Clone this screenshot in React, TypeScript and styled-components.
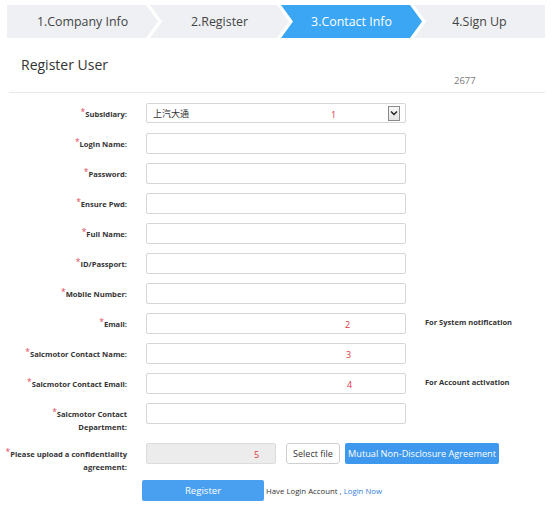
import React from "react";
import styled, { createGlobalStyle, css } from "styled-components";

const GlobalStyle = createGlobalStyle`
  html, body { margin: 0; padding: 0; background: #fff; }
  body {
    font-family: "Open Sans", "Noto Sans CJK SC", sans-serif;
    color: #333;
    overflow: hidden;
  }
`;

const Page = styled.div`
  width: 553px;
  padding-top: 5px;
`;

const StepsBar = styled.div`
  display: flex;
  margin-left: 7px;
  height: 33px;
`;

const Step = styled.div<{ $w: number; $active?: boolean; $pos: "first" | "mid" | "last" }>`
  flex: none;
  width: ${(p) => p.$w}px;
  margin-left: ${(p) => (p.$pos === "first" ? 0 : -8)}px;
  display: flex;
  align-items: center;
  justify-content: center;
  font-size: 12.4px;
  background: ${(p) => (p.$active ? "#3ba6f4" : "#eef0f3")};
  color: ${(p) => (p.$active ? "#fff" : "#444")};
  ${(p) =>
    p.$pos === "first"
      ? css`clip-path: polygon(0 0, calc(100% - 12px) 0, 100% 50%, calc(100% - 12px) 100%, 0 100%);`
      : p.$pos === "last"
      ? css`clip-path: polygon(0 0, 100% 0, 100% 100%, 0 100%, 12px 50%);`
      : css`clip-path: polygon(0 0, calc(100% - 12px) 0, 100% 50%, calc(100% - 12px) 100%, 0 100%, 12px 50%);`}
`;

const Header = styled.div`
  padding-left: 21px;
`;

const Title = styled.h1`
  margin: 18px 0 0;
  font-size: 14px;
  line-height: 17px;
  font-weight: 400;
  color: #333;
`;

const Code = styled.div`
  margin: 2px 0 0 433px;
  font-size: 9.5px;
  line-height: 11px;
  color: #777;
`;

const Divider = styled.div`
  margin: 6px 8px 0 9px;
  height: 1px;
  background: #e8e8e8;
`;

const Form = styled.div`
  margin-top: 10px;
  display: flex;
  flex-direction: column;
`;

const Row = styled.div<{ $h?: number }>`
  display: grid;
  grid-template-columns: 127px 260px auto;
  column-gap: 19px;
  align-items: start;
  height: ${(p) => p.$h ?? 30}px;
`;

const Label = styled.div`
  text-align: right;
  font-weight: 700;
  font-size: 7.6px;
  line-height: 13px;
  padding-top: 4px;
  color: #333;
  white-space: nowrap;
`;

const Star = styled.span`
  color: #e2485a;
  font-weight: 400;
  font-size: 8.5px;
  position: relative;
  top: -2px;
`;

const Field = styled.div<{ $span?: boolean }>`
  position: relative;
  height: 21px;
  ${(p) => p.$span && css`grid-column: span 2; display: flex; align-items: center;`}
`;

const TextBox = styled.div<{ $w?: number; $disabled?: boolean }>`
  position: relative;
  box-sizing: border-box;
  width: ${(p) => (p.$w ? `${p.$w}px` : "100%")};
  height: 21px;
  border: 1px solid ${(p) => (p.$disabled ? "#dcdcdc" : "#d6d6d6")};
  border-radius: 2px;
  background: ${(p) => (p.$disabled ? "#ececec" : "#fff")};
  display: flex;
  align-items: center;
  padding: 0 6px;
  font-size: 9px;
  color: #333;
`;

const SelectBox = styled(TextBox)`
  height: 20px;
  justify-content: space-between;
  padding-right: 5px;
`;

const DropButton = styled.div`
  box-sizing: border-box;
  width: 12px;
  height: 15px;
  border: 1px solid #8a8a8a;
  background: linear-gradient(#f7f7f7, #e4e4e4);
  display: flex;
  align-items: center;
  justify-content: center;
`;

const Mark = styled.span<{ $x: number }>`
  position: absolute;
  left: ${(p) => p.$x}px;
  top: 50%;
  transform: translateY(-50%);
  font-size: 9px;
  color: #e0333f;
`;

const Note = styled.div`
  font-weight: 700;
  font-size: 7.5px;
  line-height: 13px;
  padding-top: 3px;
  color: #333;
  white-space: nowrap;
`;

const FileButton = styled.button`
  box-sizing: border-box;
  margin-left: 10px;
  width: 54px;
  height: 21px;
  border: 1px solid #cfcfcf;
  border-radius: 3px;
  background: #fff;
  font-family: inherit;
  font-size: 9px;
  color: #333;
  padding: 0;
`;

const BlueButton = styled.button<{ $w: number }>`
  box-sizing: border-box;
  width: ${(p) => p.$w}px;
  height: 21px;
  border: none;
  border-radius: 2px;
  background: #3d98ee;
  color: #fff;
  font-family: inherit;
  font-size: 9.2px;
  padding: 0;
`;

const AgreementButton = styled(BlueButton)`
  margin-left: 5px;
`;

const ActionRow = styled.div`
  display: flex;
  align-items: center;
  padding-left: 142px;
  gap: 2px;
`;

const RegisterButton = styled(BlueButton)`
  background: #4aa0f0;
  font-size: 9.6px;
`;

const LoginText = styled.span`
  font-size: 7.8px;
  color: #333;
`;

const LoginLink = styled.a`
  color: #2f80d8;
  text-decoration: none;
`;

const steps = [
  { t: "1.Company Info", w: 151 },
  { t: "2.Register", w: 139 },
  { t: "3.Contact Info", w: 141, active: true },
  { t: "4.Sign Up", w: 131 },
];

type FieldDef = { label: string; mark?: { x: number; t: string }; note?: string };

const fields: FieldDef[] = [
  { label: "Login Name:" },
  { label: "Password:" },
  { label: "Ensure Pwd:" },
  { label: "Full Name:" },
  { label: "ID/Passport:" },
  { label: "Mobile Number:" },
  { label: "Email:", mark: { x: 199, t: "2" }, note: "For System notification" },
  { label: "Saicmotor Contact Name:", mark: { x: 200, t: "3" } },
  { label: "Saicmotor Contact Email:", mark: { x: 201, t: "4" }, note: "For Account activation" },
];

export default function App() {
  return (
    <Page>
      <GlobalStyle />
      <StepsBar>
        {steps.map((s, i) => (
          <Step
            key={s.t}
            $w={s.w}
            $active={s.active}
            $pos={i === 0 ? "first" : i === steps.length - 1 ? "last" : "mid"}
          >
            {s.t}
          </Step>
        ))}
      </StepsBar>
      <Header>
        <Title>Register User</Title>
        <Code>2677</Code>
      </Header>
      <Divider />
      <Form>
        <Row>
          <Label>
            <Star>*</Star>Subsidiary:
          </Label>
          <Field>
            <SelectBox>
              <span>上汽大通</span>
              <DropButton>
                <svg width="8" height="6" viewBox="0 0 8 6">
                  <path d="M1 1.5 L4 4.5 L7 1.5" fill="none" stroke="#222" strokeWidth="1.4" />
                </svg>
              </DropButton>
            </SelectBox>
            <Mark $x={185}>1</Mark>
          </Field>
        </Row>
        {fields.map((f) => (
          <Row key={f.label}>
            <Label>
              <Star>*</Star>
              {f.label}
            </Label>
            <Field>
              <TextBox />
              {f.mark && <Mark $x={f.mark.x}>{f.mark.t}</Mark>}
            </Field>
            {f.note && <Note>{f.note}</Note>}
          </Row>
        ))}
        <Row $h={40}>
          <Label>
            <Star>*</Star>Saicmotor Contact
            <br />
            Department:
          </Label>
          <Field>
            <TextBox />
          </Field>
        </Row>
        <Row $h={37}>
          <Label>
            <Star>*</Star>Please upload a confidentiality
            <br />
            agreement:
          </Label>
          <Field $span>
            <TextBox $w={130} $disabled>
              <Mark $x={107}>5</Mark>
            </TextBox>
            <FileButton>Select file</FileButton>
            <AgreementButton $w={154}>Mutual Non-Disclosure Agreement</AgreementButton>
          </Field>
        </Row>
        <ActionRow>
          <RegisterButton $w={122}>Register</RegisterButton>
          <LoginText>
            Have Login Account , <LoginLink href="#">Login Now</LoginLink>
          </LoginText>
        </ActionRow>
      </Form>
    </Page>
  );
}
